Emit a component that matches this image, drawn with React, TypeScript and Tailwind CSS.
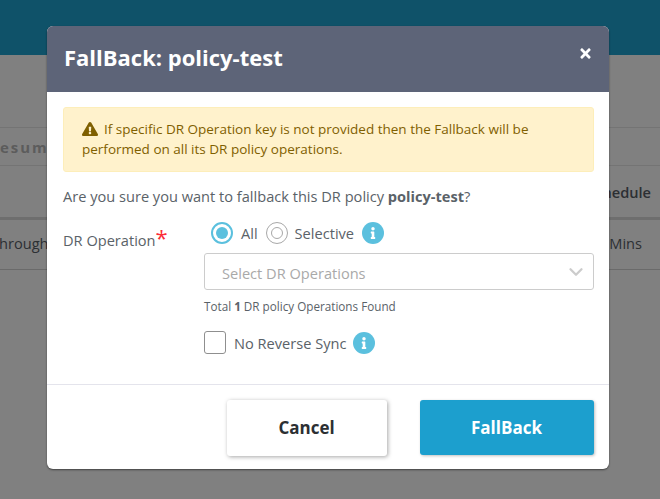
import { ChevronDown } from 'lucide-react'
import { FaExclamationTriangle, FaInfo, FaTimes } from 'react-icons/fa'

function InfoDot() {
  return (
    <span className="flex h-[22px] w-[22px] items-center justify-center rounded-full bg-[#5bc0de] text-white">
      <FaInfo size={12} />
    </span>
  )
}

function Radio({ checked }: { checked?: boolean }) {
  return (
    <span
      className={`flex h-[22px] w-[22px] items-center justify-center rounded-full ${
        checked ? 'border-2 border-[#5bc0de]' : 'border border-[#a8a8a8]'
      }`}
    >
      <span
        className={`h-3 w-3 rounded-full ${checked ? 'bg-[#5bc0de]' : 'border border-[#a8a8a8] bg-white'}`}
      />
    </span>
  )
}

export default function App() {
  return (
    <div className="relative h-[499px] w-[660px] overflow-hidden bg-[#808080] font-['Open_Sans',sans-serif] text-[14.6px] text-[#2c2f33]">
      <div className="h-[55px] bg-[#0f5269]" />

      {/* page behind the dialog */}
      <div className="mt-[72px] flex h-[39px] items-center border-y border-[#747474] pt-[1px] text-[15px] font-bold tracking-[2px] text-[#5c5c5c]">
        <span className="-ml-[12px]">Resume</span>
      </div>
      <div className="flex h-[54px] items-center justify-end border-b-[3px] border-[#6e6e6e] pt-[2px] font-semibold">
        <span className="mr-[9px]">Schedule</span>
      </div>
      <div className="flex h-[50px] items-center justify-between border-b border-[#6a6a6a]">
        <span className="-ml-[9px] -translate-y-px">Throughput</span>
        <span className="mr-[18px] -translate-y-px">5 Mins</span>
      </div>

      <div className="absolute left-[47px] top-[26px] flex h-[443px] w-[562px] flex-col overflow-hidden rounded-[6px] bg-white shadow-[0_1px_2px_rgba(0,0,0,0.5)]">
        <div className="flex h-[67px] shrink-0 justify-between border-b border-white bg-[#5d6478] pl-[17px] pr-[16px] text-white">
          <h2 className="pt-[15px] text-[22px] leading-[33px] font-bold">FallBack: policy-test</h2>
          <FaTimes size={15} className="mt-[20px]" />
        </div>

        <div className="flex-1 pl-[16px] pr-[15px] pt-[14px]">
          <div className="h-[65px] rounded-[3px] border border-[#fdeeba] bg-[#fff2cc] px-[18px] py-[11px] text-[13.5px] leading-[20px] text-[#7f6000]">
            <FaExclamationTriangle size={16} className="mr-[6px] inline-block -translate-y-px" />
            If specific DR Operation key is not provided then the Fallback will be performed on all its DR policy operations.
          </div>

          <p className="mt-[14px] leading-[20px] text-[#5a6268]">
            Are you sure you want to fallback this DR policy <b className="font-bold">policy-test</b>?
          </p>

          <div className="mt-[15px] flex">
            <div className="w-[141px] pt-[9px] leading-[20px] text-[#5a6268]">
              DR Operation<span className="text-[22px] leading-[10px] text-red-500">*</span>
            </div>
            <div className="flex-1">
              <div className="flex h-[24px] items-center pl-[7px] leading-[20px] text-[#5a6268]">
                <Radio checked />
                <span className="ml-[8px]">All</span>
                <span className="ml-[8px]"><Radio /></span>
                <span className="ml-[7px]">Selective</span>
                <span className="ml-[8px]"><InfoDot /></span>
              </div>
              <div className="mt-[8px] flex h-[37px] items-center justify-between rounded-[3px] border border-[#ccc] pl-[17px] pr-[6px] text-[#a9a9a9]">
                <span className="translate-y-[2px]">Select DR Operations</span>
                <ChevronDown size={22} strokeWidth={2.5} className="text-[#ccc]" />
              </div>
              <p className="mt-[8px] text-[11.7px] leading-[16px] text-[#5a6268]">
                Total <b>1</b> DR policy Operations Found
              </p>
              <div className="mt-[17px] flex items-center leading-[20px] text-[#5a6268]">
                <span className="h-[23px] w-[22px] rounded-[3px] border border-[#8f8f8f]" />
                <span className="ml-[8px]">No Reverse Sync</span>
                <span className="ml-[7px]"><InfoDot /></span>
              </div>
            </div>
          </div>
        </div>

        <div className="flex h-[85px] shrink-0 items-start justify-end gap-[33px] border-t border-[#e4e4ec] pr-[15px] pt-[15px] text-[17px] font-bold">
          <button className="h-[56px] w-[160px] rounded-[3px] bg-white pr-[1px] text-[#2c2f33] shadow-[1px_1px_4px_rgba(0,0,0,0.35)]">Cancel</button>
          <button className="h-[55px] w-[174px] rounded-[3px] bg-[#1c9fce] pr-[1px] text-white shadow-[1px_1px_3px_rgba(0,0,0,0.25)]">FallBack</button>
        </div>
      </div>
    </div>
  )
}
